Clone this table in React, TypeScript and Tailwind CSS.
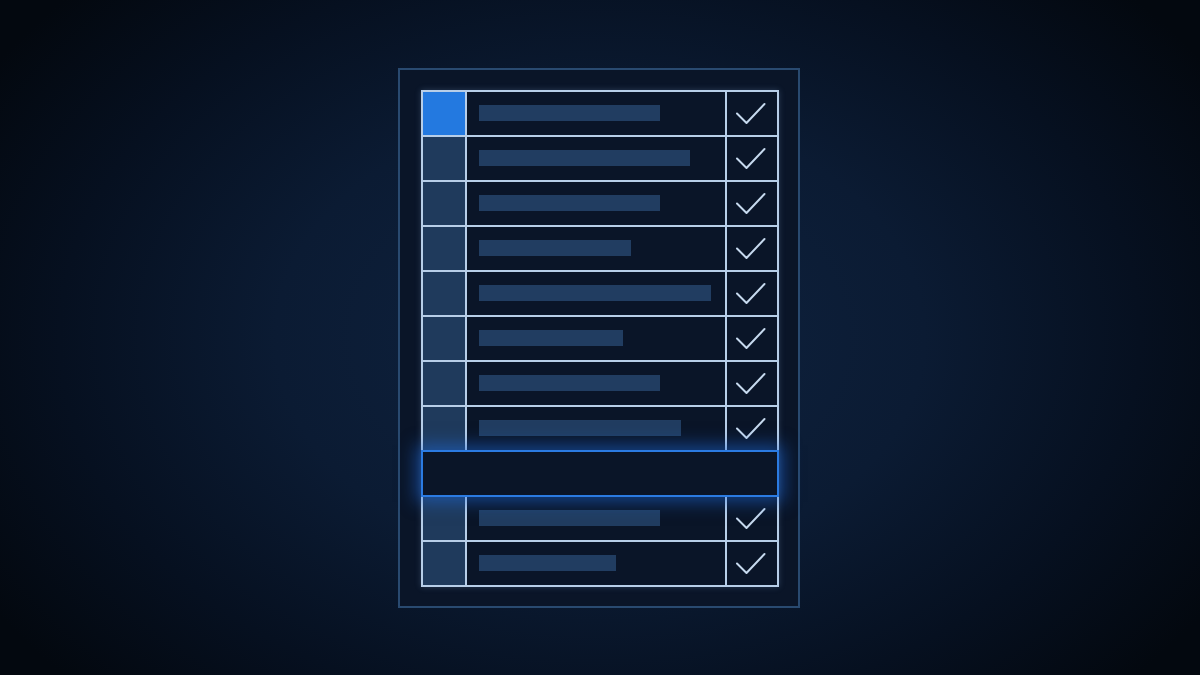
type Row = {
  bar: number;
  active?: boolean;
  highlight?: boolean;
};

const rows: Row[] = [
  { bar: 181, active: true },
  { bar: 211 },
  { bar: 181 },
  { bar: 152 },
  { bar: 232 },
  { bar: 144 },
  { bar: 181 },
  { bar: 202 },
  { bar: 0, highlight: true },
  { bar: 181 },
  { bar: 137 },
];

function Check() {
  return (
    <svg width="50" height="43" viewBox="0 0 50 43" fill="none">
      <path
        d="M10 21.5 L19.5 31 L37.5 12"
        stroke="#c6d9ee"
        strokeWidth="2"
        strokeLinecap="round"
        strokeLinejoin="round"
      />
    </svg>
  );
}

export default function App() {
  return (
    <div className="w-full h-[675px] flex items-center justify-center pr-[2px] bg-[radial-gradient(ellipse_60%_75%_at_50%_50%,#0f2340_0%,#0b1b33_45%,#061020_75%,#03080f_100%)] font-['Liberation_Sans',sans-serif]">
      {/* Panel */}
      <div className="w-[402px] h-[540px] border-2 border-[#294a70] bg-[#0a1528] pl-[21px] pt-[20px]">
        {/* Table */}
        <div className="w-[358px] flex flex-col gap-[2px] p-[2px] bg-[#b7cee8] shadow-[0_0_6px_rgba(140,180,230,0.25)]">
          {rows.map((row, i) =>
            row.highlight ? (
              <div
                key={i}
                className="relative z-10 -mx-[2px] -my-[2px] h-[47px] border-2 border-[#2b7be2] bg-[#0a1528] shadow-[0_0_16px_5px_rgba(30,110,230,0.5)]"
              />
            ) : (
              <div key={i} className="flex gap-[2px] h-[43px]">
                <div className={`w-[42px] ${row.active ? 'bg-[#2379e0]' : 'bg-[#1f3a5c]'}`} />
                <div className="w-[258px] bg-[#0a1528] flex items-center pl-[12px]">
                  <div className="h-[16px] bg-[#213d61]" style={{ width: row.bar }} />
                </div>
                <div className="w-[50px] bg-[#0a1528]">
                  <Check />
                </div>
              </div>
            )
          )}
        </div>
      </div>
    </div>
  );
}
